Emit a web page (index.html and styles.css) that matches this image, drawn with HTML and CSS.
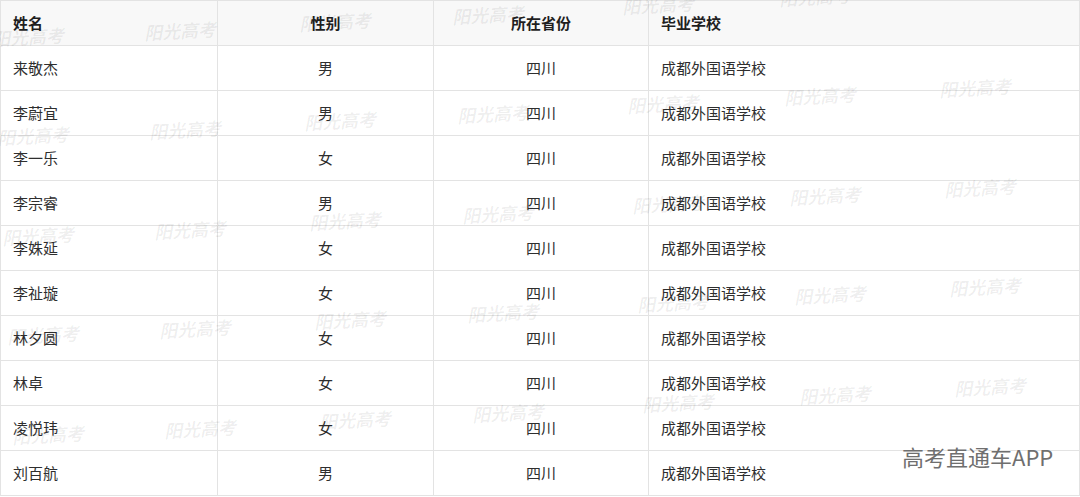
FILE: index.html
```html
<!DOCTYPE html>
<html lang="zh-CN">
<head>
    <meta charset="UTF-8">
    <meta name="viewport" content="width=device-width, initial-scale=1.0">
    <title>成都外国语学校</title>
    <link rel="stylesheet" href="styles.css">
</head>
<body>
    <div class="page" id="page">
        <table class="student-table">
            <colgroup>
                <col class="col-name">
                <col class="col-sex">
                <col class="col-prov">
                <col>
            </colgroup>
            <thead>
                <tr>
                    <th>姓名</th>
                    <th class="center">性别</th>
                    <th class="center">所在省份</th>
                    <th>毕业学校</th>
                </tr>
            </thead>
            <tbody>
                <tr><td>来敬杰</td><td class="center">男</td><td class="center">四川</td><td>成都外国语学校</td></tr>
                <tr><td>李蔚宜</td><td class="center">男</td><td class="center">四川</td><td>成都外国语学校</td></tr>
                <tr><td>李一乐</td><td class="center">女</td><td class="center">四川</td><td>成都外国语学校</td></tr>
                <tr><td>李宗睿</td><td class="center">男</td><td class="center">四川</td><td>成都外国语学校</td></tr>
                <tr><td>李姝延</td><td class="center">女</td><td class="center">四川</td><td>成都外国语学校</td></tr>
                <tr><td>李祉璇</td><td class="center">女</td><td class="center">四川</td><td>成都外国语学校</td></tr>
                <tr><td>林夕圆</td><td class="center">女</td><td class="center">四川</td><td>成都外国语学校</td></tr>
                <tr><td>林卓</td><td class="center">女</td><td class="center">四川</td><td>成都外国语学校</td></tr>
                <tr><td>凌悦玮</td><td class="center">女</td><td class="center">四川</td><td>成都外国语学校</td></tr>
                <tr><td>刘百航</td><td class="center">男</td><td class="center">四川</td><td>成都外国语学校</td></tr>
            </tbody>
        </table>

        <!-- 水印层 -->
        <div class="watermarks" id="watermarks"></div>
        <div class="app-mark">高考直通车APP</div>
    </div>

    <script>
        // 平铺水印 "阳光高考"
        const layer = document.getElementById('watermarks');
        const colX = [0, 152, 307, 460, 630, 787, 942];
        const colY = [137, 131, 122, 115, 105, 97, 89];

        for (let row = -1; row < 4; row++) {
            colX.forEach((x, i) => {
                const mark = document.createElement('span');
                mark.className = 'watermark';
                mark.textContent = '阳光高考';
                mark.style.left = (x + row * 5 - 3) + 'px';
                mark.style.top = (colY[i] + row * 99.5 - 11) + 'px';
                layer.appendChild(mark);
            });
        }
    </script>
</body>
</html>
```

FILE: styles.css
```css
body {
    margin: 0;
    padding: 0;
    background-color: #ffffff;
    font-family: "Noto Sans CJK SC", "Noto Sans", sans-serif;
    color: #2e2e2e;
}

.page {
    position: relative;
    width: 1080px;
    height: 497px;
    overflow: hidden;
}

.student-table {
    width: 1080px;
    border-collapse: collapse;
    table-layout: fixed;
    font-size: 15px;
}

.col-name {
    width: 217px;
}

.col-sex {
    width: 216px;
}

.col-prov {
    width: 215px;
}

.student-table th,
.student-table td {
    height: 44px;
    padding: 0 12px;
    border: 1px solid #e3e3e3;
    text-align: left;
    vertical-align: middle;
    line-height: 20px;
    white-space: nowrap;
}

.student-table th {
    background-color: #f8f8f8;
    font-weight: bold;
    color: #1f1f1f;
}

.student-table .center {
    text-align: center;
}

.watermarks {
    position: absolute;
    top: 0;
    left: 0;
    width: 100%;
    height: 100%;
    pointer-events: none;
}

.watermark {
    position: absolute;
    font-family: "Noto Sans CJK SC", serif;
    font-size: 18px;
    line-height: 22px;
    font-weight: bold;
    font-style: italic;
    color: rgba(0, 0, 0, 0.065);
    transform: rotate(-3deg);
    transform-origin: left center;
    white-space: nowrap;
}

.app-mark {
    position: absolute;
    left: 902px;
    top: 442px;
    font-size: 22px;
    line-height: 28px;
    color: #6f6f6f;
    text-shadow: 0 0 2px #ffffff;
    white-space: nowrap;
}
```
